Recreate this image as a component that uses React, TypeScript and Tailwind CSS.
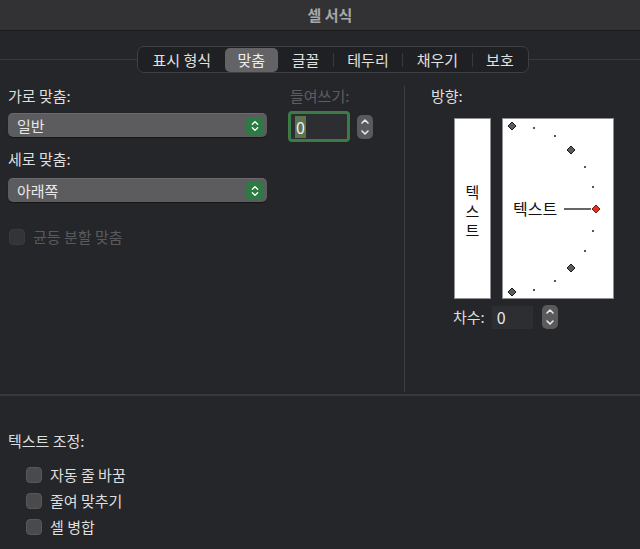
import React from "react";

const FONT = "font-['Noto_Sans_CJK_KR','Noto_Sans',sans-serif]";

function UpDown({ className = "" }: { className?: string }) {
  return (
    <svg viewBox="0 0 10 16" className={className} fill="none" stroke="currentColor" strokeWidth="1.6" strokeLinecap="round" strokeLinejoin="round">
      <path d="M2 6 L5 3 L8 6" />
      <path d="M2 10 L5 13 L8 10" />
    </svg>
  );
}

function Stepper() {
  return (
    <div className="flex h-[24px] w-[16px] flex-col items-center justify-between rounded-[5px] bg-[#5a5a5d] py-[2px] text-[#e8e8e8]">
      <svg viewBox="0 0 10 8" className="h-[8px] w-[10px]" fill="none" stroke="currentColor" strokeWidth="1.6" strokeLinecap="round" strokeLinejoin="round">
        <path d="M2 6 L5 3 L8 6" />
      </svg>
      <svg viewBox="0 0 10 8" className="h-[8px] w-[10px]" fill="none" stroke="currentColor" strokeWidth="1.6" strokeLinecap="round" strokeLinejoin="round">
        <path d="M2 2 L5 5 L8 2" />
      </svg>
    </div>
  );
}

function Select({ value }: { value: string }) {
  return (
    <div className="flex h-[24px] w-[259px] items-center justify-between rounded-[5px] border-t border-[#6a6a6d] bg-[#5c5c5f] pl-[9px] pr-[3px] shadow-[0_1px_1px_rgba(0,0,0,0.4)]">
      <span className="text-[15px] leading-5 text-[#e8e8e8]">{value}</span>
      <div className="flex h-[18px] w-[18px] items-center justify-center rounded-[4px] bg-[#2e7a45] text-white">
        <UpDown className="h-[14px] w-[10px]" />
      </div>
    </div>
  );
}

function Check({ label, disabled = false }: { label: string; disabled?: boolean }) {
  return (
    <div className="flex h-5 items-center gap-[8px]">
      <div
        className={
          disabled
            ? "h-[16px] w-[16px] rounded-[4px] border border-[#3a3a3c] bg-[#343436]"
            : "h-[16px] w-[16px] rounded-[4px] border border-[#58585b] bg-[#4a4a4d]"
        }
      />
      <span className={disabled ? "text-[15px] leading-5 text-[#5a5a5d]" : "text-[15px] leading-5 text-[#dedede]"}>{label}</span>
    </div>
  );
}

const tabs = ["표시 형식", "맞춤", "글꼴", "테두리", "채우기", "보호"];

function Diamond({ x, y, red = false }: { x: number; y: number; red?: boolean }) {
  return (
    <path
      d={`M${x} ${y - 4} L${x + 4} ${y} L${x} ${y + 4} L${x - 4} ${y} Z`}
      fill={red ? "#e2301c" : "#5c5c5c"}
      stroke={red ? "#7a1a10" : "#1a1a1a"}
      strokeWidth="1"
    />
  );
}

function OrientationDial() {
  const dots = [
    [31, 9], [52, 17], [82, 48], [90, 68], [90, 112], [82, 132], [52, 162], [31, 171],
  ];
  return (
    <div className="h-[181px] w-[112px] border border-[#8e8e93] bg-white">
      <svg viewBox="0 0 110 179" className="h-[179px] w-[110px]">
        {dots.map(([x, y], i) => (
          <rect key={i} x={x - 1} y={y - 1} width="2" height="2" fill="#555" />
        ))}
        <Diamond x={9} y={7} />
        <Diamond x={68} y={31} />
        <Diamond x={68} y={149} />
        <Diamond x={9} y={173} />
        <line x1="61" y1="90" x2="88" y2="90" stroke="#000" strokeWidth="1.2" />
        <Diamond x={93} y={90} red />
        <text x="10" y="96" fontSize="16" fill="#111" fontFamily="'Noto Sans CJK KR', sans-serif">
          텍스트
        </text>
      </svg>
    </div>
  );
}

export default function App() {
  return (
    <div className={`${FONT} flex h-[549px] w-[640px] flex-col overflow-hidden bg-[#25262a]`}>
      <div className="flex h-[31px] shrink-0 items-center justify-center border-b border-[#1a1a1c] bg-[#323235] pl-[20px]">
        <span className="text-[15px] font-semibold leading-5 text-[#a8a8aa]">셀 서식</span>
      </div>

      <div className="flex h-[49px] shrink-0 items-start pt-[15px]">
        <div className="flex h-[27px] w-full items-center">
          <div className="h-px w-[137px] bg-[#3a3a3d]" />
          <div className="flex h-[27px] items-center rounded-[7px] border border-[#3e3f42] bg-[#1f2023] px-px">
            {tabs.map((t, i) => {
              const active = i === 1;
              const prevActive = i === 2;
              return (
                <React.Fragment key={t}>
                  {i > 0 && !active && !prevActive && <div className="h-[14px] w-px bg-[#38393c]" />}
                  <div
                    className={
                      active
                        ? "flex h-[24px] items-center rounded-[5px] bg-[#636366] px-[13px] text-[15px] leading-5 text-[#ececec]"
                        : "flex h-[24px] items-center px-[13.5px] text-[15px] leading-5 text-[#e0e0e0]"
                    }
                  >
                    {t}
                  </div>
                </React.Fragment>
              );
            })}
          </div>
          <div className="h-px flex-1 bg-[#3a3a3d]" />
        </div>
      </div>

      <div className="flex h-[314px] shrink-0">
        <div className="flex w-[404px] pl-[8px] pt-[6px]">
          <div className="flex w-[259px] flex-col">
            <span className="h-5 text-[15px] leading-5 text-[#dedede]">가로 맞춤:</span>
            <div className="mt-[7px]">
              <Select value="일반" />
            </div>
            <span className="mt-[12px] h-5 text-[15px] leading-5 text-[#dedede]">세로 맞춤:</span>
            <div className="mt-[9px]">
              <Select value="아래쪽" />
            </div>
            <div className="mt-[25px] pl-px">
              <Check label="균등 분할 맞춤" disabled />
            </div>
          </div>
          <div className="ml-[21px] flex flex-col">
            <span className="h-5 pl-[2px] text-[15px] leading-5 text-[#5e5e61]">들여쓰기:</span>
            <div className="mt-[5px] flex items-center gap-[7px]">
              <div className="flex h-[31px] w-[62px] items-center rounded-[4px] border-[3px] border-[#3c7a48] bg-[#2d2e31] pl-[4px]">
                <span className="flex h-[22px] w-[11px] items-center justify-center bg-[#5b7350] text-[16px] leading-5 text-[#f2f2f2]">0</span>
              </div>
              <Stepper />
            </div>
          </div>
        </div>
        <div className="mt-[6px] mb-[2px] w-px bg-[#3e3e41]" />
        <div className="flex flex-1 flex-col pl-[26px] pt-[6px]">
          <span className="h-5 text-[15px] leading-5 text-[#dedede]">방향:</span>
          <div className="mt-[12px] flex gap-[11px] pl-[23px]">
            <div className="flex h-[181px] w-[37px] flex-col items-center justify-center border border-[#8e8e93] bg-white pt-[4px] text-[15px] leading-[19px] text-[#111]">
              <span>텍</span>
              <span>스</span>
              <span>트</span>
            </div>
            <OrientationDial />
          </div>
          <div className="mt-[6px] flex h-[24px] items-center pl-[22px]">
            <span className="text-[15px] leading-5 text-[#dedede]">차수:</span>
            <div className="ml-[7px] flex h-[23px] w-[41px] items-center bg-[#2d2e31] pl-[5px] text-[16px] leading-5 text-[#e8e8e8]">0</div>
            <div className="ml-[9px]">
              <Stepper />
            </div>
          </div>
        </div>
      </div>

      <div className="h-[2px] shrink-0 bg-[#38383b]" />

      <div className="flex flex-col pl-[8px]">
        <span className="mt-[35px] h-5 text-[15px] leading-5 text-[#dedede]">텍스트 조정:</span>
        <div className="mt-[14px] flex flex-col gap-[6px] pl-[18px]">
          <Check label="자동 줄 바꿈" />
          <Check label="줄여 맞추기" />
          <Check label="셀 병합" />
        </div>
      </div>
    </div>
  );
}
